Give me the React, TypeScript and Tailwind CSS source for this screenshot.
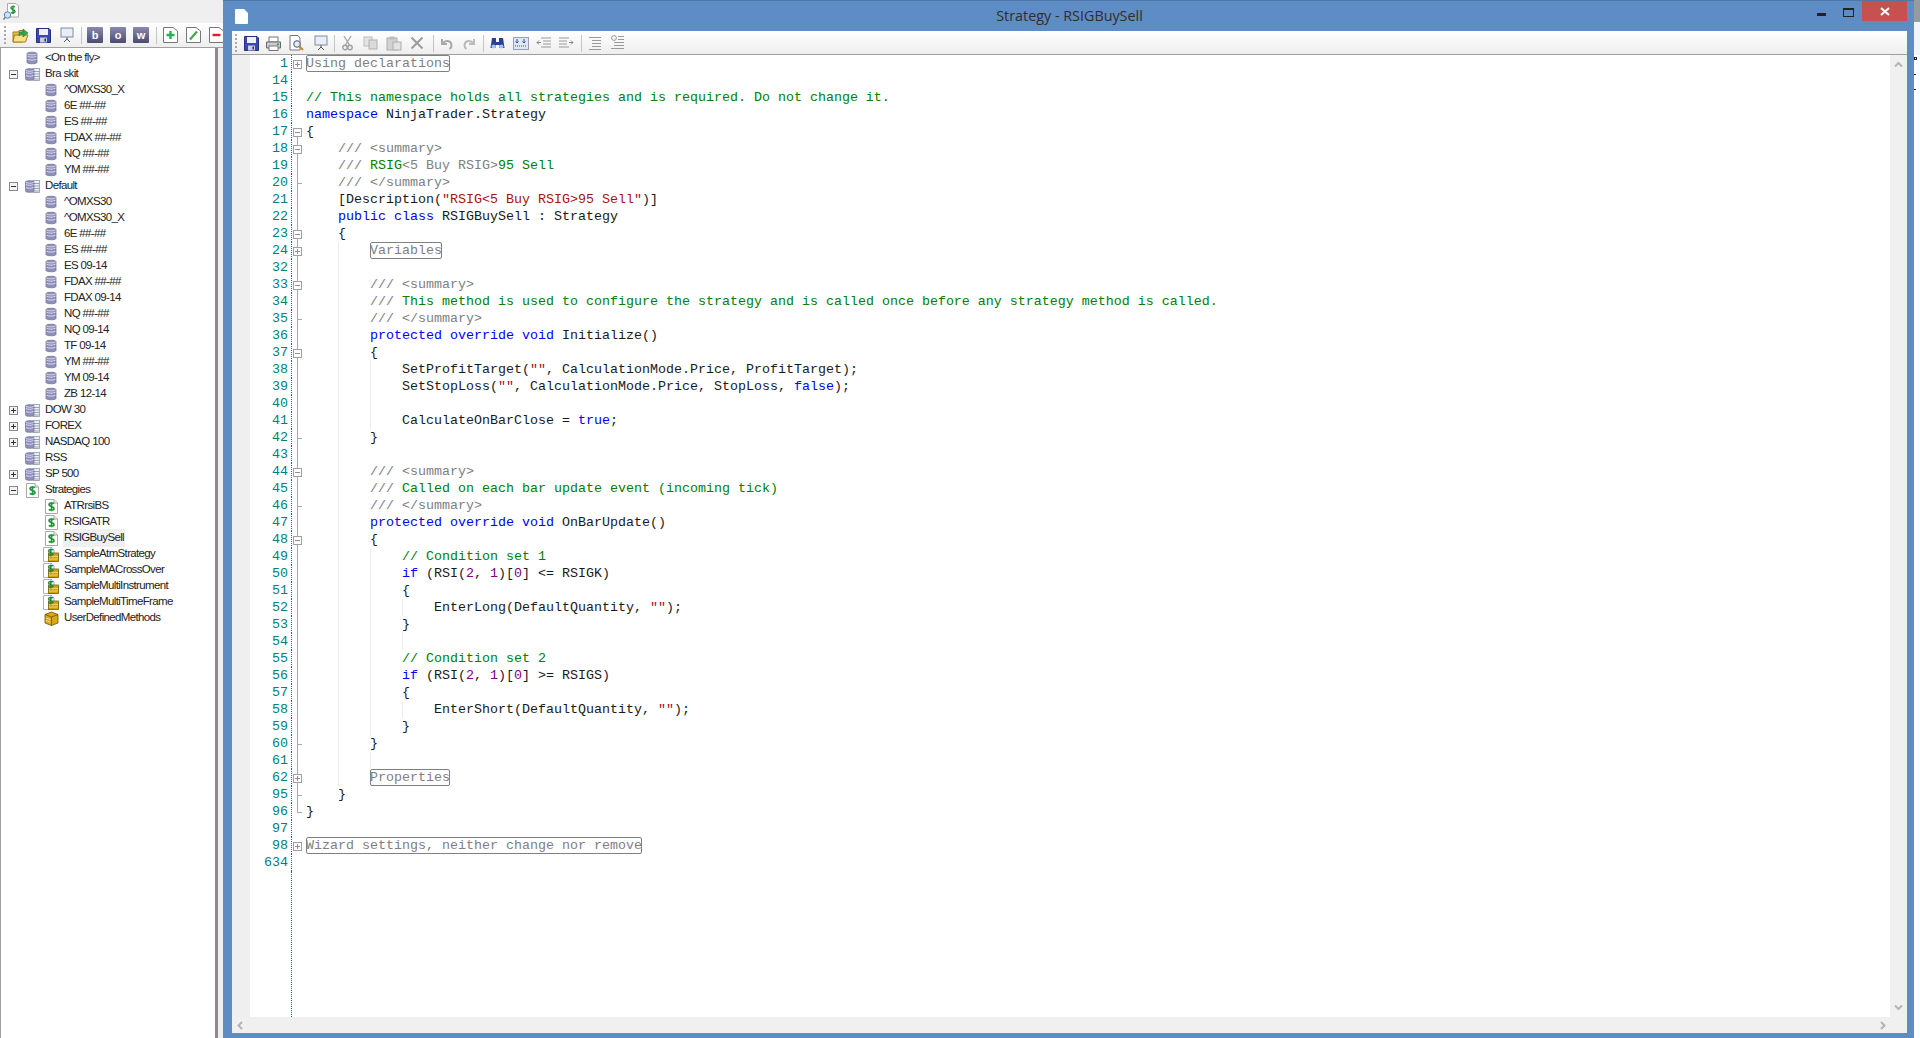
import type { ReactNode } from "react";

const mono = "font-['Liberation_Mono',monospace]";

// syntax colours
const tone: Record<string, string> = {
  k: "text-[#0000ff]",
  c: "text-[#008000]",
  d: "text-[#808080]",
  s: "text-[#a31515]",
  n: "text-[#800080]",
  t: "text-[#1a1a1a]",
};

type Fold = "" | "p" | "pl" | "m" | "ml" | "l" | "t" | "e";
type Row = { no: number; fold: Fold; g?: number; box?: string; code?: [string, string][] };

const rows: Row[] = [
  { no: 1, fold: "p", box: "Using declarations" },
  { no: 14, fold: "" },
  { no: 15, fold: "", code: [["c", "// This namespace holds all strategies and is required. Do not change it."]] },
  { no: 16, fold: "", code: [["k", "namespace"], ["t", " NinjaTrader.Strategy"]] },
  { no: 17, fold: "m", code: [["t", "{"]] },
  { no: 18, fold: "ml", code: [["t", "    "], ["d", "/// <summary>"]] },
  { no: 19, fold: "l", code: [["t", "    "], ["d", "/// "], ["c", "RSIG"], ["d", "<5 Buy RSIG>"], ["c", "95 Sell"]] },
  { no: 20, fold: "t", code: [["t", "    "], ["d", "/// </summary>"]] },
  { no: 21, fold: "l", code: [["t", "    [Description("], ["s", "\"RSIG<5 Buy RSIG>95 Sell\""], ["t", ")]"]] },
  { no: 22, fold: "l", code: [["t", "    "], ["k", "public class"], ["t", " RSIGBuySell : Strategy"]] },
  { no: 23, fold: "ml", code: [["t", "    {"]] },
  { no: 24, fold: "pl", g: 1, box: "Variables" },
  { no: 32, fold: "l", g: 1 },
  { no: 33, fold: "ml", g: 1, code: [["t", "        "], ["d", "/// <summary>"]] },
  { no: 34, fold: "l", g: 1, code: [["t", "        "], ["d", "/// "], ["c", "This method is used to configure the strategy and is called once before any strategy method is called."]] },
  { no: 35, fold: "t", g: 1, code: [["t", "        "], ["d", "/// </summary>"]] },
  { no: 36, fold: "l", g: 1, code: [["t", "        "], ["k", "protected override void"], ["t", " Initialize()"]] },
  { no: 37, fold: "ml", g: 1, code: [["t", "        {"]] },
  { no: 38, fold: "l", g: 2, code: [["t", "            SetProfitTarget("], ["s", "\"\""], ["t", ", CalculationMode.Price, ProfitTarget);"]] },
  { no: 39, fold: "l", g: 2, code: [["t", "            SetStopLoss("], ["s", "\"\""], ["t", ", CalculationMode.Price, StopLoss, "], ["k", "false"], ["t", ");"]] },
  { no: 40, fold: "l", g: 2 },
  { no: 41, fold: "l", g: 2, code: [["t", "            CalculateOnBarClose = "], ["k", "true"], ["t", ";"]] },
  { no: 42, fold: "t", g: 1, code: [["t", "        }"]] },
  { no: 43, fold: "l", g: 1 },
  { no: 44, fold: "ml", g: 1, code: [["t", "        "], ["d", "/// <summary>"]] },
  { no: 45, fold: "l", g: 1, code: [["t", "        "], ["d", "/// "], ["c", "Called on each bar update event (incoming tick)"]] },
  { no: 46, fold: "t", g: 1, code: [["t", "        "], ["d", "/// </summary>"]] },
  { no: 47, fold: "l", g: 1, code: [["t", "        "], ["k", "protected override void"], ["t", " OnBarUpdate()"]] },
  { no: 48, fold: "ml", g: 1, code: [["t", "        {"]] },
  { no: 49, fold: "l", g: 2, code: [["t", "            "], ["c", "// Condition set 1"]] },
  { no: 50, fold: "l", g: 2, code: [["t", "            "], ["k", "if"], ["t", " (RSI("], ["n", "2"], ["t", ", "], ["n", "1"], ["t", ")["], ["n", "0"], ["t", "] <= RSIGK)"]] },
  { no: 51, fold: "l", g: 2, code: [["t", "            {"]] },
  { no: 52, fold: "l", g: 3, code: [["t", "                EnterLong(DefaultQuantity, "], ["s", "\"\""], ["t", ");"]] },
  { no: 53, fold: "l", g: 2, code: [["t", "            }"]] },
  { no: 54, fold: "l", g: 3 },
  { no: 55, fold: "l", g: 2, code: [["t", "            "], ["c", "// Condition set 2"]] },
  { no: 56, fold: "l", g: 2, code: [["t", "            "], ["k", "if"], ["t", " (RSI("], ["n", "2"], ["t", ", "], ["n", "1"], ["t", ")["], ["n", "0"], ["t", "] >= RSIGS)"]] },
  { no: 57, fold: "l", g: 2, code: [["t", "            {"]] },
  { no: 58, fold: "l", g: 3, code: [["t", "                EnterShort(DefaultQuantity, "], ["s", "\"\""], ["t", ");"]] },
  { no: 59, fold: "l", g: 2, code: [["t", "            }"]] },
  { no: 60, fold: "t", g: 1, code: [["t", "        }"]] },
  { no: 61, fold: "l", g: 2 },
  { no: 62, fold: "pl", g: 1, box: "Properties" },
  { no: 95, fold: "t", code: [["t", "    }"]] },
  { no: 96, fold: "e", code: [["t", "}"]] },
  { no: 97, fold: "" },
  { no: 98, fold: "p", box: "Wizard settings, neither change nor remove" },
  { no: 634, fold: "" },
];

// how far a collapsed region box is pushed in
const boxIndent: Record<number, string> = {
  1: "ml-0",
  24: "ml-[64px]",
  62: "ml-[64px]",
  98: "ml-0",
};

type Item = { label: string; depth: 0 | 1; icon: string; toggle?: "+" | "-"; selected?: boolean };

const inst = (label: string): Item => ({ label, depth: 1, icon: "db" });
const strat = (label: string, selected?: boolean): Item => ({ label, depth: 1, icon: "doc", selected });
const sample = (label: string): Item => ({ label, depth: 1, icon: "lock" });

const tree: Item[] = [
  { label: "<On the fly>", depth: 0, icon: "db" },
  { label: "Bra skit", depth: 0, icon: "list", toggle: "-" },
  inst("^OMXS30_X"),
  inst("6E ##-##"),
  inst("ES ##-##"),
  inst("FDAX ##-##"),
  inst("NQ ##-##"),
  inst("YM ##-##"),
  { label: "Default", depth: 0, icon: "list", toggle: "-" },
  inst("^OMXS30"),
  inst("^OMXS30_X"),
  inst("6E ##-##"),
  inst("ES ##-##"),
  inst("ES 09-14"),
  inst("FDAX ##-##"),
  inst("FDAX 09-14"),
  inst("NQ ##-##"),
  inst("NQ 09-14"),
  inst("TF 09-14"),
  inst("YM ##-##"),
  inst("YM 09-14"),
  inst("ZB 12-14"),
  { label: "DOW 30", depth: 0, icon: "list", toggle: "+" },
  { label: "FOREX", depth: 0, icon: "list", toggle: "+" },
  { label: "NASDAQ 100", depth: 0, icon: "list", toggle: "+" },
  { label: "RSS", depth: 0, icon: "list" },
  { label: "SP 500", depth: 0, icon: "list", toggle: "+" },
  { label: "Strategies", depth: 0, icon: "doc", toggle: "-" },
  strat("ATRrsiBS"),
  strat("RSIGATR"),
  strat("RSIGBuySell", true),
  sample("SampleAtmStrategy"),
  sample("SampleMACrossOver"),
  sample("SampleMultiInstrument"),
  sample("SampleMultiTimeFrame"),
  { label: "UserDefinedMethods", depth: 1, icon: "box" },
];

const Db = () => (
  <svg width="12" height="14" viewBox="0 0 12 14">
    <path d="M1 2.5C1 .8 11 .8 11 2.5V11.5C11 13.2 1 13.2 1 11.5Z" fill="#8f8fbd" stroke="#6f7090" strokeWidth="0.7" />
    <path d="M1.5 5.2C4 6.4 8 6.4 10.5 5.2M1.5 8.2C4 9.4 8 9.4 10.5 8.2M1.5 3C4 4.2 8 4.2 10.5 3" fill="none" stroke="#d6d6ea" />
  </svg>
);

const DbList = () => (
  <svg width="15" height="15" viewBox="0 0 15 15">
    <rect x="8" y="1.5" width="6.5" height="12" fill="#eef0f6" stroke="#8d93a8" strokeWidth="0.8" />
    <path d="M9 4.5H14M9 7H14M9 9.5H14M9 12H14" stroke="#9aa0b8" />
    <path d="M.5 3C.5 1.2 9 1.2 9 3V12C9 13.8.5 13.8.5 12Z" fill="#8f8fbd" stroke="#6f7090" strokeWidth="0.7" />
    <path d="M1 5.5C3 6.6 6.5 6.6 8.5 5.5M1 8.5C3 9.6 6.5 9.6 8.5 8.5M1 3.5C3 4.5 6.5 4.5 8.5 3.5" fill="none" stroke="#d6d6ea" />
  </svg>
);

const DollarDoc = () => (
  <svg width="13" height="15" viewBox="0 0 13 15">
    <path d="M.5.5H9L12.5 4V14.5H.5Z" fill="#fff" stroke="#a9a9a9" />
    <path d="M9 .5V4H12.5" fill="#e6e6e6" stroke="#a9a9a9" />
    <path d="M9 4.6C8.3 3.9 4 3.6 4 5.8 4 8 9 7.2 9 9.4 9 11.5 4.6 11.2 3.8 10.4M6.5 3V12.2" fill="none" stroke="#1f9a3c" strokeWidth="1.7" />
  </svg>
);

const LockDoc = () => (
  <svg width="16" height="15" viewBox="0 0 16 15">
    <path d="M.5.5H9L11 3V14.5H.5Z" fill="#fff" stroke="#b0b0b0" />
    <rect x="5.5" y="6" width="10" height="8.5" fill="#d1a10f" stroke="#7a5c05" strokeWidth="0.8" />
    <path d="M6 9.5H15M6 12H15" stroke="#f2d566" />
    <path d="M10 3.2C9.4 2.2 5.5 2 5.5 4 5.5 6 10 5.4 10 7.2 10 8.8 6.2 8.6 5.3 7.8M7.8 1.4V9.6" fill="none" stroke="#1f8a38" strokeWidth="1.4" />
  </svg>
);

const GoldBox = () => (
  <svg width="15" height="15" viewBox="0 0 15 15">
    <path d="M1 3.5 7.5 1 14 3.5V12L7.5 14.5 1 12Z" fill="#d8a815" stroke="#6b5205" strokeWidth="0.8" />
    <path d="M1 3.5 7.5 6 14 3.5M7.5 6V14.5" fill="none" stroke="#6b5205" strokeWidth="0.8" />
    <path d="M2 7 6.5 8.7M2 9.5 6.5 11.2" stroke="#f7e08a" />
  </svg>
);

const treeIcons: Record<string, ReactNode> = {
  db: <Db />,
  list: <DbList />,
  doc: <DollarDoc />,
  lock: <LockDoc />,
  box: <GoldBox />,
};

const Toggle = ({ sign }: { sign: "+" | "-" }) => (
  <svg width="9" height="9" viewBox="0 0 9 9">
    <rect x="0.5" y="0.5" width="8" height="8" fill="#f4f4f4" stroke="#8a8a8a" />
    <path d={sign === "+" ? "M2 4.5H7M4.5 2V7" : "M2 4.5H7"} stroke="#333" />
  </svg>
);

const FoldMark = ({ kind }: { kind: Fold }) => {
  if (!kind) return <span className="w-[12px] shrink-0" />;
  const through = kind === "l" || kind === "pl" || kind === "ml" || kind === "t";
  const isBox = kind === "p" || kind === "pl" || kind === "m" || kind === "ml";
  const plus = kind === "p" || kind === "pl";
  return (
    <svg width="12" height="17" viewBox="0 0 12 17" className="shrink-0">
      {through && <path d="M5.5 0V17" stroke="#a8a8a8" />}
      {kind === "m" && <path d="M5.5 10V17" stroke="#a8a8a8" />}
      {kind === "t" && <path d="M5.5 9.5H10" stroke="#a8a8a8" />}
      {kind === "e" && <path d="M5.5 0V9.5H10" fill="none" stroke="#a8a8a8" />}
      {isBox && (
        <>
          <rect x="1.5" y="5.5" width="8" height="8" fill="#fff" stroke="#a0a0a0" />
          <path d={plus ? "M3 9.5H8M5.5 7V12" : "M3 9.5H8"} stroke="#909090" />
        </>
      )}
    </svg>
  );
};

const Grip = () => (
  <span className="flex flex-col gap-[2px] shrink-0">
    {[0, 1, 2, 3, 4].map((i) => (
      <span key={i} className="w-[2px] h-[2px] bg-[#a8a8a8]" />
    ))}
  </span>
);

const Sep = () => <span className="block w-px h-[17px] bg-[#c4c4c4] shrink-0" />;

const Floppy = () => (
  <svg width="15" height="15" viewBox="0 0 15 15">
    <path d="M.5.5H13L14.5 2V14.5H.5Z" fill="#3a48b0" stroke="#27307a" />
    <rect x="3" y="1" width="9" height="6" fill="#eef1fb" />
    <rect x="4" y="9.5" width="7" height="5" fill="#c9cde0" />
    <rect x="8.5" y="10.5" width="1.5" height="3" fill="#333" />
  </svg>
);

const Screen = () => (
  <svg width="14" height="16" viewBox="0 0 14 16">
    <rect x="1" y="1" width="12" height="9" fill="#e8eef6" stroke="#7f8c9c" />
    <path d="M7 10V12M7 12 4 15M7 12 10 15" stroke="#555" fill="none" />
  </svg>
);

const PageTool = ({ fill, d, color }: { fill?: string; d: string; color: string }) => (
  <svg width="15" height="16" viewBox="0 0 15 16">
    <path d="M.5.5H10L14.5 4V15.5H.5Z" fill={fill ?? "#fff"} stroke="#777" />
    <path d={d} stroke={color} strokeWidth="2.4" fill="none" />
  </svg>
);

const Square = ({ children }: { children: string }) => (
  <span className="w-[16px] h-[16px] shrink-0 rounded-[1px] bg-gradient-to-b from-[#8a8ab0] to-[#4c4c70] flex items-center justify-center text-white font-['Liberation_Sans',sans-serif] font-bold text-[11px] leading-none">
    {children}
  </span>
);

const EditorTools = () => (
  <div className="h-[24px] shrink-0 border-b border-[#a0a0a0] bg-gradient-to-b from-white to-[#eeeeee] flex items-center pl-[3px] pt-[1px]">
    <Grip />
    <span className="ml-[7px]"><Floppy /></span>
    <svg className="ml-[7px]" width="15" height="15" viewBox="0 0 15 15">
      <rect x="3" y="1" width="9" height="5" fill="#fff" stroke="#777" />
      <path d="M.5 6H14.5V12H.5Z" fill="#c9ccd2" stroke="#666" />
      <rect x="3" y="10" width="9" height="4.5" fill="#fff" stroke="#777" />
      <rect x="11" y="7.5" width="2" height="1.5" fill="#22b14c" />
    </svg>
    <svg className="ml-[8px]" width="15" height="16" viewBox="0 0 15 16">
      <path d="M1 .5H9L11 3V15H1Z" fill="#fff" stroke="#777" />
      <circle cx="8" cy="9" r="3.3" fill="#dcecf7" stroke="#557" />
      <path d="M10.5 11.5 14 15" stroke="#c78a1a" strokeWidth="2" />
    </svg>
    <span className="ml-[10px]"><Screen /></span>
    <span className="ml-[6px]"><Sep /></span>
    <svg className="ml-[7px]" width="11" height="16" viewBox="0 0 11 16">
      <path d="M2 1 7.5 10M9 1 3.5 10" stroke="#a8a8a8" strokeWidth="1.4" />
      <circle cx="3" cy="12.5" r="2.2" fill="none" stroke="#a0a0a0" strokeWidth="1.4" />
      <circle cx="8" cy="12.5" r="2.2" fill="none" stroke="#a0a0a0" strokeWidth="1.4" />
    </svg>
    <svg className="ml-[10px]" width="15" height="14" viewBox="0 0 15 14">
      <rect x="1" y="1" width="8" height="9" fill="#e4e4e4" stroke="#bdbdbd" />
      <rect x="6" y="4" width="8" height="9" fill="#dadada" stroke="#b0b0b0" />
    </svg>
    <svg className="ml-[8px]" width="16" height="15" viewBox="0 0 16 15">
      <rect x="1" y="2" width="10" height="12" fill="#d2d2d2" stroke="#aeaeae" />
      <rect x="3.5" y=".5" width="5" height="3" fill="#bbb" />
      <rect x="7" y="6" width="8" height="8" fill="#e2e2e2" stroke="#aeaeae" />
    </svg>
    <svg className="ml-[8px]" width="14" height="14" viewBox="0 0 14 14">
      <path d="M1.5 1.5 12.5 12.5M12.5 1.5 1.5 12.5" stroke="#9c9c9c" strokeWidth="2" />
    </svg>
    <span className="ml-[9px]"><Sep /></span>
    <svg className="ml-[7px]" width="12" height="13" viewBox="0 0 12 13">
      <path d="M1 2V7H6M1.5 6.5C4 3 10 3 10.5 8 10.6 9.5 10 11 8.5 12" fill="none" stroke="#a8a8a8" strokeWidth="2" />
    </svg>
    <svg className="ml-[10px]" width="12" height="13" viewBox="0 0 12 13">
      <path d="M11 2V7H6M10.5 6.5C8 3 2 3 1.5 8 1.4 9.5 2 11 3.5 12" fill="none" stroke="#bbbbbb" strokeWidth="2" />
    </svg>
    <span className="ml-[8px]"><Sep /></span>
    <svg className="ml-[6px]" width="15" height="14" viewBox="0 0 15 14">
      <path d="M2 2H6V6H9V2H13L14.5 12H9.5V9H5.5V12H.5Z" fill="#27408f" />
      <circle cx="3.5" cy="10.5" r="2" fill="#a9c4ea" />
      <circle cx="11.5" cy="10.5" r="2" fill="#a9c4ea" />
    </svg>
    <svg className="ml-[8px]" width="16" height="14" viewBox="0 0 16 14">
      <rect x=".5" y="1.5" width="15" height="12" fill="#dfe6f5" stroke="#444c80" strokeDasharray="1 1" />
      <path d="M4 3V7M2.5 5.5 4 7 5.5 5.5M11 3V7M9.5 5.5 11 7 12.5 5.5" stroke="#2c4fb0" fill="none" />
      <path d="M2 10H14" stroke="#555" strokeDasharray="1 1" />
    </svg>
    <svg className="ml-[7px]" width="16" height="14" viewBox="0 0 16 14">
      <path d="M5 2H15M7 5H15M7 8H15M5 11H15" stroke="#999" strokeWidth="1.2" />
      <path d="M5 6.5H1M3 4.5 1 6.5 3 8.5" stroke="#8a8a8a" fill="none" />
    </svg>
    <svg className="ml-[6px]" width="16" height="14" viewBox="0 0 16 14">
      <path d="M1 2H11M1 5H9M1 8H9M1 11H11" stroke="#999" strokeWidth="1.2" />
      <path d="M11 6.5H15M13 4.5 15 6.5 13 8.5" stroke="#8a8a8a" fill="none" />
    </svg>
    <span className="ml-[7px]"><Sep /></span>
    <svg className="ml-[6px]" width="14" height="15" viewBox="0 0 14 15">
      <path d="M1 1.5H13M4 4.5H13M4 7.5H13M4 10.5H13M1 13.5H13" stroke="#9a9a9a" />
    </svg>
    <svg className="ml-[8px]" width="15" height="16" viewBox="0 0 15 16">
      <circle cx="4" cy="3" r="2.4" fill="none" stroke="#999" />
      <path d="M8 1.5H14M8 4.5H14M4 7.5H14M4 10.5H14M1 13.5H14" stroke="#9a9a9a" />
    </svg>
  </div>
);

const Chevron = ({ d, size = 9 }: { d: string; size?: number }) => (
  <svg width={size} height={size} viewBox="0 0 9 9">
    <path d={d} fill="none" stroke="#b4b4b4" strokeWidth="2" />
  </svg>
);

const CodeRow = ({ row }: { row: Row }) => (
  <div className={`relative flex h-[17px] leading-[17px] ${mono} text-[13.33px] whitespace-pre`}>
    <span className="w-[41px] shrink-0 pr-[3px] text-right text-[#008080]">{row.no}</span>
    <span className="w-px shrink-0 border-l border-dotted border-[#008060]" />
    <FoldMark kind={row.fold} />
    <span className="ml-[2px]">
      {row.box ? (
        <span className={`inline-block h-[17px] outline outline-[#808080] -outline-offset-1 rounded-[2px] text-[#808080] leading-[17px] ${boxIndent[row.no]}`}>
          {row.box}
        </span>
      ) : (
        row.code?.map(([c, text], i) => (
          <span key={i} className={tone[c]}>
            {text}
          </span>
        ))
      )}
    </span>
    {(row.g ?? 0) >= 1 && <span className="absolute left-[88px] top-0 h-full w-px bg-[#ececec]" />}
    {(row.g ?? 0) >= 2 && <span className="absolute left-[120px] top-0 h-full w-px bg-[#ececec]" />}
    {(row.g ?? 0) >= 3 && <span className="absolute left-[152px] top-0 h-full w-px bg-[#ececec]" />}
  </div>
);

export default function App() {
  return (
    <div className="flex w-[1920px] h-[1038px] overflow-hidden bg-white">
      {/* Navigator */}
      <aside className="w-[223px] shrink-0 flex flex-col bg-[#f0f0f0]">
        <div className="h-[23px] shrink-0 flex items-center pl-[3px] bg-[#efefef]">
          <svg width="16" height="17" viewBox="0 0 16 17">
            <path d="M4.5.5H13L15.5 3V14H4.5Z" fill="#fff" stroke="#aaa" />
            <path d="M12 4C11 3 8 3 8 5 8 7 12 6.5 12 8.5 12 10.5 8.8 10 8 9.4M10 2.5V11" fill="none" stroke="#1f9a3c" strokeWidth="1.5" />
            <circle cx="4.5" cy="12" r="3.2" fill="#cfe3f5" stroke="#5b83ad" />
            <path d="M2 14.5 .5 16.5" stroke="#5b83ad" strokeWidth="1.5" />
          </svg>
        </div>
        <div className="h-[25px] shrink-0 bg-gradient-to-b from-white to-[#eeeeee] flex items-center pl-[4px] border-b border-[#a0a0a0] overflow-hidden">
          <Grip />
          <svg className="ml-[6px] shrink-0" width="17" height="17" viewBox="0 0 17 17">
            <path d="M1 5H6L7 3.5H11V15H1Z" fill="#e9c04d" stroke="#a67f17" />
            <path d="M2.5 8H16L13.5 15H1Z" fill="#f8e08a" stroke="#a67f17" />
            <path d="M7 5H11V2L16 6 11 10V7C9 7 8 7.5 7 9Z" fill="#2fa84f" stroke="#1b7a36" strokeWidth="0.6" />
          </svg>
          <span className="ml-[7px] shrink-0"><Floppy /></span>
          <span className="ml-[9px] shrink-0"><Screen /></span>
          <span className="ml-[7px] shrink-0"><Sep /></span>
          <span className="ml-[5px] shrink-0"><Square>b</Square></span>
          <span className="ml-[7px] shrink-0"><Square>o</Square></span>
          <span className="ml-[7px] shrink-0"><Square>w</Square></span>
          <span className="ml-[7px] shrink-0"><Sep /></span>
          <span className="ml-[6px] shrink-0"><PageTool d="M3.5 8H11.5M7.5 4V12" color="#22b14c" /></span>
          <span className="ml-[8px] shrink-0"><PageTool d="M4 12.5 11 4.5" color="#4aa84a" /></span>
          <span className="ml-[8px] shrink-0"><PageTool d="M3.5 8H11.5" color="#ed1c24" /></span>
        </div>
        <div className="flex-1 flex min-h-0 bg-white border-l border-[#a0a0a0]">
          <div className="flex-1 min-w-0 overflow-hidden pt-[2px] font-['Liberation_Sans',sans-serif] text-[11.5px] tracking-[-0.65px] text-[#222222]">
            {tree.map((item, i) => (
              <div key={i} className="h-[16px] flex items-center relative">
                {item.toggle && (
                  <span className="absolute left-[8px] top-[4px] flex">
                    <Toggle sign={item.toggle} />
                  </span>
                )}
                <span className={`flex justify-center w-[16px] shrink-0 ${item.depth === 0 ? "ml-[23px]" : "ml-[42px]"}`}>
                  {treeIcons[item.icon]}
                </span>
                <span className={`ml-[4px] px-[1px] whitespace-nowrap ${item.selected ? "bg-[#f0f0f0]" : ""}`}>
                  {item.label}
                </span>
              </div>
            ))}
          </div>
          <div className="w-[3px] shrink-0 bg-[#8c8c8c]" />
          <div className="w-[5px] shrink-0 bg-[#f0f0f0]" />
        </div>
      </aside>

      {/* Strategy window */}
      <main className="flex-1 min-w-0 flex flex-col bg-[#5e8cc4] border-t border-[#4e76a8] pl-[9px] pr-[7px]">
        <div className="h-[30px] shrink-0 flex items-start relative">
          <svg className="mt-[8px] ml-[3px]" width="13" height="15" viewBox="0 0 13 15">
            <path d="M0 1Q0 0 1 0H9L13 4V14Q13 15 12 15H1Q0 15 0 14Z" fill="#fff" />
          </svg>
          <span className="flex-1 text-center font-['Open_Sans',sans-serif] text-[14.35px] leading-[30px] text-[#2e2e2e] pl-[74px]">
            Strategy - RSIGBuySell
          </span>
          <svg className="mt-[12px]" width="9" height="3" viewBox="0 0 9 3">
            <rect width="9" height="3" fill="#222" />
          </svg>
          <svg className="mt-[7px] ml-[17px]" width="11" height="9" viewBox="0 0 11 9">
            <rect x="0.5" y="0.5" width="10" height="8" fill="none" stroke="#222" />
            <rect x="0" y="0" width="11" height="2" fill="#222" />
          </svg>
          <span className="w-[45px] h-[20px] ml-[8px] bg-[#c75050] flex items-center justify-center">
            <svg width="10" height="9" viewBox="0 0 10 9">
              <path d="M1 1 9 8M9 1 1 8" stroke="#fff" strokeWidth="2" />
            </svg>
          </span>
        </div>
        <EditorTools />
        <div className="flex-1 min-h-0 flex flex-col bg-white">
          <div className="flex-1 min-h-0 flex">
            <div className="w-[18px] shrink-0 bg-[#efefef]" />
            <div className="flex-1 min-w-0 flex flex-col">
              {rows.map((row) => (
                <CodeRow key={row.no} row={row} />
              ))}
              <div className="flex-1 flex">
                <span className="w-[41px] shrink-0" />
                <span className="w-px border-l border-dotted border-[#008060]" />
              </div>
            </div>
            <div className="w-[17px] shrink-0 bg-[#f0f0f0] flex flex-col items-center justify-between py-[5px]">
              <Chevron d="M1 6.5 4.5 3 8 6.5" />
              <Chevron d="M1 2.5 4.5 6 8 2.5" />
            </div>
          </div>
          <div className="h-[16px] shrink-0 bg-[#f0f0f0] flex items-center justify-between pl-[4px] pr-[20px]">
            <Chevron d="M6 1 2.5 4.5 6 8" />
            <Chevron d="M3 1 6.5 4.5 3 8" />
          </div>
        </div>
        <div className="h-[5px] shrink-0" />
      </main>

      {/* edge of the window behind */}
      <div className="w-[6px] shrink-0 flex flex-col bg-white">
        <div className="h-[22px] shrink-0 bg-[#9a9a9a]" />
        <div className="h-[33px] shrink-0 bg-[#f4f4f4]" />
        <div className="flex flex-col gap-[14px] pt-[2px]">
          <span className="w-[3px] h-[3px] border border-[#222]" />
          <span className="w-[2px] h-px bg-[#222]" />
          <span className="w-[2px] h-px bg-[#222]" />
        </div>
      </div>
    </div>
  );
}
